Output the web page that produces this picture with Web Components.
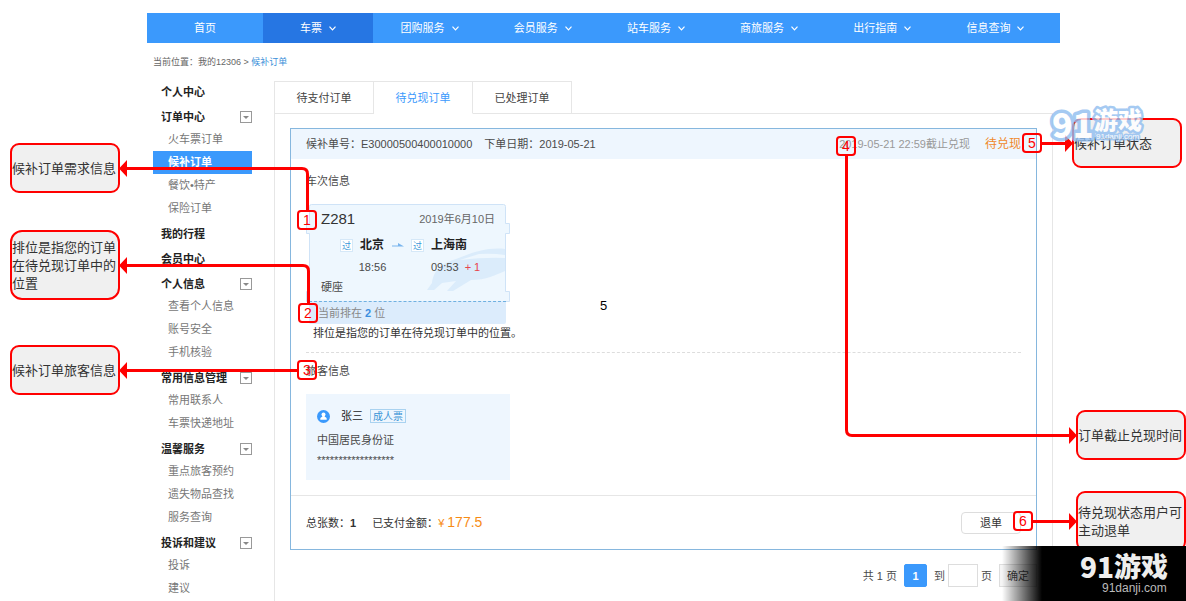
<!DOCTYPE html>
<html lang="zh-CN">
<head>
<meta charset="utf-8">
<title>候补订单</title>
<style>
  body {
    margin: 0;
    background: #fff;
    color: #4a4a4a;
    font: 11px/20px "Liberation Sans", "Noto Sans CJK SC", sans-serif;
  }
</style>
</head>
<body>
<help-page></help-page>

<script>
const define = (name, html, setup) => {
  const tpl = document.createElement('template');
  tpl.innerHTML = html;
  customElements.define(name, class extends HTMLElement {
    constructor() {
      super();
      this.attachShadow({ mode: 'open' }).appendChild(tpl.content.cloneNode(true));
    }
    connectedCallback() {
      if (setup && !this.ready) { this.ready = true; setup(this, this.shadowRoot); }
    }
  });
};

/* One entry of the top bar */
define('nav-item', `
<style>
  :host { display: block; }
  :host([active]) { background: #2676e3; }
  a { display: flex; align-items: center; justify-content: center; gap: 7px; height: 30px; color: #fff; text-decoration: none; }
  svg { display: none; }
  :host([menu]) svg { display: block; }
</style>
<a href="#"><slot></slot><svg width="7" height="5" viewBox="0 0 7 5" fill="none" stroke="#fff" stroke-width="1.2"><path d="M.5 .7 3.5 3.8 6.5 .7"/></svg></a>`);

define('top-nav', `
<style>
  :host { display: block; background: #3b99fc; }
  nav { display: grid; grid-template-columns: 116px 110px repeat(6, 1fr); padding-right: 8px; }
</style>
<nav>
  <nav-item>首页</nav-item>
  <nav-item menu active>车票</nav-item>
  <nav-item menu>团购服务</nav-item>
  <nav-item menu>会员服务</nav-item>
  <nav-item menu>站车服务</nav-item>
  <nav-item menu>商旅服务</nav-item>
  <nav-item menu>出行指南</nav-item>
  <nav-item menu>信息查询</nav-item>
</nav>`);

define('crumb-trail', `
<style>
  :host { display: block; font-size: 9px; line-height: 20px; color: #666; }
  a { color: #3b8fd9; text-decoration: none; }
</style>
<span>当前位置：我的12306 &gt; </span><a href="#">候补订单</a>`);

/* Heading of the side menu with its links */
define('menu-group', `
<style>
  :host { display: block; margin-bottom: 3px; }
  .head { display: flex; justify-content: space-between; align-items: center; height: 22px; padding-left: 8px; }
  .head a { color: #222; font-weight: bold; text-decoration: none; }
  button { width: 12px; height: 12px; padding: 0; border: 1px solid #999; background: #fff; display: flex; align-items: center; justify-content: center; }
  ::slotted(a) { display: block; height: 23px; line-height: 23px; padding-left: 15px; color: #777; text-decoration: none; }
  ::slotted(a[aria-current]) { background: #3b99fc; color: #fff; font-weight: bold; }
</style>
<div class="head"><a href="#"></a><button aria-label="收起"><svg width="6" height="3" viewBox="0 0 6 3"><path d="M0 0H6L3 3Z" fill="#888"/></svg></button></div>
<slot></slot>`, (el, root) => {
  root.querySelector('a').textContent = el.getAttribute('heading');
  if (!el.children.length) root.querySelector('button').remove();
});

define('side-menu', `
<style>:host { display: block; }</style>
<nav>
  <menu-group heading="个人中心"></menu-group>
  <menu-group heading="订单中心"><a href="#">火车票订单</a><a href="#" aria-current="page">候补订单</a><a href="#">餐饮•特产</a><a href="#">保险订单</a></menu-group>
  <menu-group heading="我的行程"></menu-group>
  <menu-group heading="会员中心"></menu-group>
  <menu-group heading="个人信息"><a href="#">查看个人信息</a><a href="#">账号安全</a><a href="#">手机核验</a></menu-group>
  <menu-group heading="常用信息管理"><a href="#">常用联系人</a><a href="#">车票快递地址</a></menu-group>
  <menu-group heading="温馨服务"><a href="#">重点旅客预约</a><a href="#">遗失物品查找</a><a href="#">服务查询</a></menu-group>
  <menu-group heading="投诉和建议"><a href="#">投诉</a><a href="#">建议</a></menu-group>
</nav>`);

define('order-tabs', `
<style>
  :host { display: flex; height: 33px; }
  button { box-sizing: border-box; width: 99px; padding: 0; border: solid #e6e6e6; border-width: 1px 1px 1px 0; background: #fff; color: #444; font: inherit; }
  button:first-of-type { width: 100px; border-left-width: 1px; }
  button[aria-selected=true] { border-bottom-color: #fff; color: #3b99fc; }
  .rest { flex: 1; border-bottom: 1px solid #e6e6e6; }
</style>
<button role="tab">待支付订单</button><button role="tab" aria-selected="true">待兑现订单</button><button role="tab">已处理订单</button><div class="rest"></div>`);

define('train-ticket', `
<style>
  :host { display: block; position: relative; width: 197px; margin-left: 3px; }
  .back { position: absolute; left: -3px; top: 0; }
  .body { position: relative; box-sizing: border-box; height: 97px; padding: 5px 11px 0 12px; }
  .top { display: flex; justify-content: space-between; height: 20px; color: #666; margin-bottom: 6px; }
  .top b { font-size: 15px; font-weight: normal; color: #333; }
  .route { display: grid; grid-template-columns: 13px 25px 12px 13px 40px; gap: 2px 7px; padding-left: 19px; align-items: center; }
  .route i { box-sizing: border-box; height: 13px; border: 1px solid #d5e8f8; background: #fff; color: #3b99d9; font: 9px/11px "Noto Sans CJK SC", sans-serif; text-align: center; }
  .route b { font-size: 12px; color: #222; white-space: nowrap; }
  .route time { grid-column: 2; justify-self: center; }
  .route time + time { grid-column: 5; justify-self: start; white-space: pre; }
  em { color: #e8444c; font-style: normal; }
  .seat { height: 20px; line-height: 20px; }
  .queue { position: relative; box-sizing: border-box; height: 23px; line-height: 22px; padding-left: 9px; border-top: 1px dashed #6fb0e0; background: #dcecfc; color: #888; border-radius: 0 0 2px 2px; }
  .queue b { color: #3b8fe0; }
</style>
<svg class="back" width="204" height="98" viewBox="0 0 204 98">
  <path d="M5.500.5H197.500Q199.500.5 199.500 2.500V19.500H203.500V29.500H199.500V87.500H203.500V97.500H.5V87.500H3.500V29.500H.5V19.500H3.500V2.500Q3.500.5 5.500.5Z" fill="#eef7fe" stroke="#cfe3f7"/>
  <path d="M199 45C181 43 165 49 150 55C133 60 127 69 126 79L121 86H128L136 79L150 77L141 87H147L165 76C180 76 190 71 199 67Z" fill="#dbecfb"/>
  <path d="M154 56 173 50Q186 49 199 51V54Q180 53 154 56Z" fill="#eef7fe"/>
</svg>
<div class="body">
  <div class="top"><b>Z281</b><span>2019年6月10日</span></div>
  <div class="route">
    <i>过</i><b>北京</b><svg width="12" height="4" viewBox="0 0 12 4"><path d="M0 3.500V2.500H6V0L12 3.500Z" fill="#79b5ee"/></svg><i>过</i><b>上海南</b>
    <time>18:56</time><time>09:53  <em>+ 1</em></time>
  </div>
  <div class="seat">硬座</div>
</div>
<div class="queue">当前排在 <b>2</b> 位</div>`);

define('passenger-card', `
<style>
  :host { display: block; box-sizing: border-box; width: 204px; height: 86px; padding: 12px 11px; background: #eef6fe; }
  .who { display: flex; align-items: center; height: 20px; margin-bottom: 4px; }
  svg { margin-right: 11px; }
  .who span { color: #222; margin-right: 7px; }
  .who b { box-sizing: border-box; height: 14px; padding: 0 2px; border: 1px solid #a9d2f0; font: 10px/12px "Noto Sans CJK SC", sans-serif; color: #3b94d6; }
</style>
<div class="who"><svg width="13" height="13" viewBox="0 0 13 13"><circle cx="6.500" cy="6.500" r="6.500" fill="#3b99fc"/><circle cx="6.500" cy="4.600" r="2" fill="#fff"/><path d="M3.300 9.800V8.600Q3.400 7.300 5.300 6.700V6H7.700V6.700Q9.600 7.300 9.700 8.600V9.800Z" fill="#fff"/></svg><span>张三</span><b>成人票</b></div>
<div>中国居民身份证</div>
<div>******************</div>`);

define('order-card', `
<style>
  :host { display: block; border: 1px solid #86b7de; }
  header { display: flex; align-items: center; height: 30px; padding: 0 15px; background: #eef6fe; }
  header span { margin-right: 12px; }
  header .limit { margin: 0 15px 0 auto; color: #999; }
  strong { font-size: 12px; font-weight: normal; color: #f0892a; }
  section { padding: 12px 15px 0; }
  h2 { margin: 0 0 13px; font: inherit; }
  p { margin: 0 0 10px; padding-left: 7px; line-height: 18px; color: #333; }
  hr { margin: 0 0 -4px; border: 0; border-top: 1px dashed #ddd; }
  section + section { padding-bottom: 15px; }
  footer { display: flex; align-items: center; height: 53px; padding: 0 15px; border-top: 1px solid #e6e6e6; color: #333; }
  footer span { margin-right: 16px; }
  .cash { color: #f78b14; margin-right: auto; }
  .cash b { font-size: 14px; font-weight: normal; }
  button { box-sizing: border-box; width: 60px; height: 22px; padding: 0; border: 1px solid #ddd; border-radius: 4px; background: #fff; color: #333; font: inherit; }
</style>
<header><span>候补单号：E30000500400010000</span><span>下单日期：2019-05-21</span><span class="limit">2019-05-21 22:59截止兑现</span><strong>待兑现</strong></header>
<section><h2>车次信息</h2><train-ticket></train-ticket><p>排位是指您的订单在待兑现订单中的位置。</p><hr></section>
<section><h2>旅客信息</h2><passenger-card></passenger-card></section>
<footer><span>总张数：<b>1</b></span><div>已支付金额：</div><div class="cash">¥ <b>177.5</b></div><button>退单</button></footer>`);

define('page-turner', `
<style>
  :host { display: flex; justify-content: flex-end; align-items: center; gap: 7px; height: 23px; }
  button, input { box-sizing: border-box; height: 23px; padding: 0; border: 1px solid #ddd; background: #fff; font: inherit; color: #444; }
  .now { width: 23px; border-color: #3b99fc; border-radius: 2px; background: #3b99fc; color: #fff; font-weight: bold; }
  .jump { display: flex; align-items: center; gap: 3px; }
  input { width: 30px; }
  .go { width: 38px; background: #f5f5f5; }
</style>
<span>共 1 页</span><button class="now">1</button><div class="jump"><label for="page">到</label><input id="page" type="text"><span>页</span></div><button class="go">确定</button>`);

/* Red-framed explanation and numbered marker */
define('call-out', `
<style>
  :host { position: absolute; box-sizing: border-box; display: flex; align-items: center; width: 110px; height: 50px; border: 2px solid #f00; border-radius: 9px; background: #f0f0f0; color: #333; font: 13px/18px "Noto Sans CJK SC", sans-serif; }
  :host([tall]) { height: 70px; border-radius: 12px; }
</style>
<div><slot></slot></div>`);

define('num-mark', `
<style>
  :host { position: absolute; box-sizing: border-box; width: 20px; height: 20px; border: 2px solid #f00; border-radius: 4px; color: #f00; font: 14px/16px "Liberation Sans", sans-serif; text-align: center; }
</style>
<slot></slot>`);

define('guide-layer', `
<style>
  :host { display: block; position: absolute; inset: 0; overflow: hidden; pointer-events: none; }
  svg { position: absolute; top: 0; }
  .l { left: 0; }
  .r { right: 0; }
  .note { position: absolute; left: 600px; top: 298px; line-height: 16px; font-size: 13px; color: #000; }
</style>
<svg class="l" width="330" height="601" fill="none" stroke="#f00" stroke-width="3">
  <path d="M307.500 210V174Q307.500 168.500 302 168.500H126M308.500 303V271Q308.500 265.500 303 265.500H126M297 370.500H126"/>
  <path d="M119 168.500 127 160V177ZM119 265.500 127 257V274ZM119 370.500 127 362V379Z" fill="#f00" stroke="none"/>
</svg>
<svg class="r" width="386" height="601" fill="none" stroke="#f00" stroke-width="3">
  <path d="M46.500 156V430Q46.500 435.500 52 435.500H270M242 143.500H266M233 521.500H270"/>
  <path d="M277 435.500 269 427V444ZM273 143.500 265 135V152ZM277 521.500 269 513V530Z" fill="#f00" stroke="none"/>
</svg>
<call-out style="left:10px;top:143px">候补订单需求信息</call-out>
<call-out tall style="left:10px;top:230px">排位是指您的订单在待兑现订单中的位置</call-out>
<call-out style="left:10px;top:345px">候补订单旅客信息</call-out>
<call-out style="right:4px;top:118px">候补订单状态</call-out>
<call-out style="right:0;top:410px">订单截止兑现时间</call-out>
<call-out style="right:0;top:491px;height:60px">待兑现状态用户可主动退单</call-out>
<num-mark style="left:297px;top:210px">1</num-mark>
<num-mark style="left:298px;top:303px">2</num-mark>
<num-mark style="left:297px;top:360px">3</num-mark>
<num-mark style="right:330px;top:136px">4</num-mark>
<num-mark style="right:144px;top:133px">5</num-mark>
<num-mark style="right:153px;top:511px">6</num-mark>
<span class="note">5</span>`);

define('site-stamp', `
<style>
  :host { display: block; position: absolute; right: 0; pointer-events: none; }
  :host([pale]) { top: 102px; right: 38px; opacity: .8; }
  :host([dark]) { top: 546px; width: 186px; height: 55px; background: linear-gradient(90deg, transparent 2px, #000 42px); }
  svg { display: block; overflow: visible; }
  .brand { font-family: "Noto Sans CJK SC", sans-serif; font-weight: 900; }
  .site { font-family: "Liberation Sans", sans-serif; }
</style>
<div></div>`, (el, root) => {
  root.querySelector('div').innerHTML = el.hasAttribute('pale')
    ? `<svg width="102" height="50" fill="#fff" stroke="#8fbdf0" stroke-width="7" stroke-linejoin="round" paint-order="stroke">
        <text class="brand" x="6" y="36" font-size="34">91</text>
        <text class="brand" x="48" y="27" font-size="24" stroke-width="5">游戏</text>
        <text class="site" x="50" y="37" font-size="8" stroke-width="3">91danji.com</text></svg>`
    : `<svg width="186" height="55" fill="#eee">
        <text class="brand" x="80" y="32" font-size="28">91</text>
        <text class="brand" x="114" y="31" font-size="27">游戏</text>
        <text class="site" x="102" y="46" font-size="12" fill="#bbb">91danji.com</text></svg>`;
});

define('help-page', `
<style>
  :host { display: block; position: relative; min-width: 1000px; height: 100vh; min-height: 601px; overflow: hidden; }
  .site { display: flex; flex-direction: column; box-sizing: border-box; height: 100%; padding: 13px 126px 0 147px; }
  crumb-trail { margin: 9px 6px; }
  .cols { flex: 1; min-height: 0; display: grid; grid-template-columns: 99px 1fr; gap: 22px; padding: 0 7px 0 6px; }
  main { display: flex; flex-direction: column; min-width: 0; }
  .panel { flex: 1; border: solid #e6e6e6; border-width: 0 1px; padding: 14px 15px 0; }
  page-turner { margin-top: 14px; }
</style>
<div class="site">
  <top-nav></top-nav>
  <crumb-trail></crumb-trail>
  <div class="cols">
    <side-menu></side-menu>
    <main><order-tabs></order-tabs><div class="panel"><order-card></order-card><page-turner></page-turner></div></main>
  </div>
</div>
<guide-layer></guide-layer>
<site-stamp pale></site-stamp>
<site-stamp dark></site-stamp>`);
</script>
</body>
</html>
